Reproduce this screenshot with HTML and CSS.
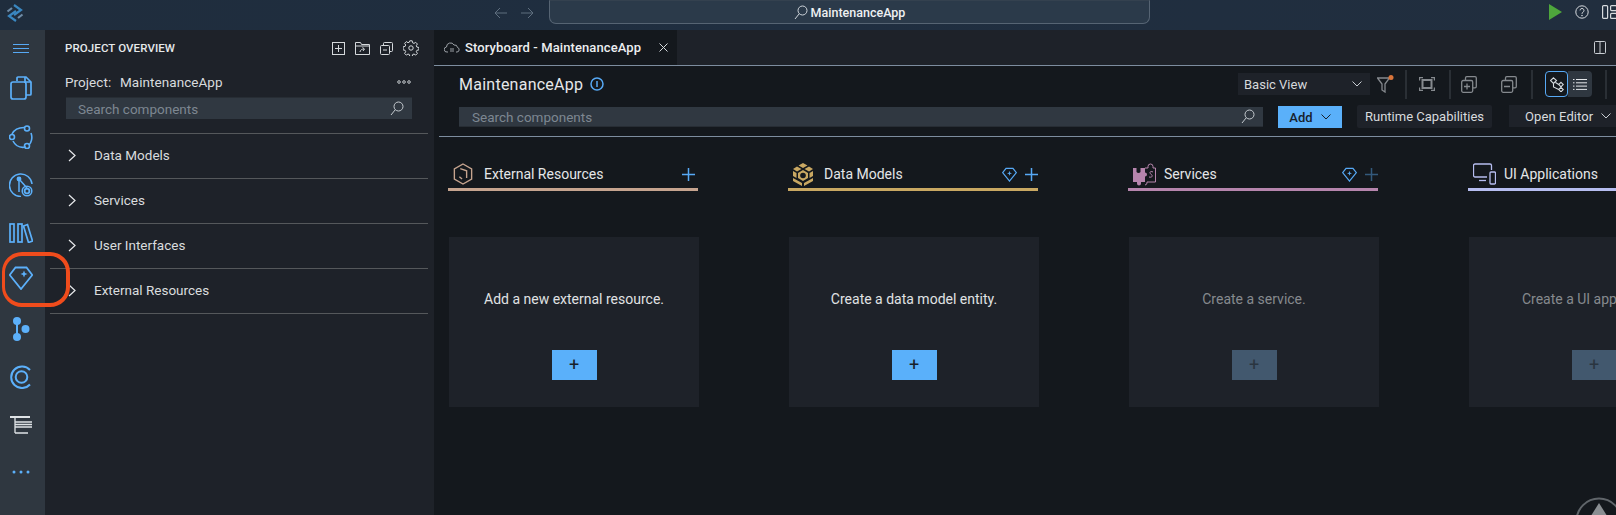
FILE: index.html
```html
<!DOCTYPE html>
<html lang="en">
<head>
<meta charset="utf-8">
<title>Storyboard - MaintenanceApp</title>
<link rel="stylesheet" href="styles.css">
</head>
<body>
<header class="topbar">
  <svg class="logo" width="18" height="18" viewBox="0 0 18 18" fill="none" stroke-width="2.200"><path d="M8 1l7 5-7 5" stroke="#3a87c0"/><path d="M10 17l-7-5 7-5" stroke="#3a87c0"/><path d="M1.500 7.500L6 4M16.500 10.500L12 14" stroke="#6d8aa5"/></svg>
  <div class="nav-arrows">
    <svg width="14" height="12" viewBox="0 0 14 12" fill="none" stroke="#5f6f7f" stroke-width="1"><path d="M13 6H1M6 1L1 6l5 5"/></svg>
    <svg width="14" height="12" viewBox="0 0 14 12" fill="none" stroke="#5f6f7f" stroke-width="1"><path d="M1 6h12M8 1l5 5-5 5"/></svg>
  </div>
  <div class="command">
    <svg width="14" height="15" viewBox="0 0 14 15" fill="none" stroke="#cfd5db" stroke-width="1"><circle cx="8.5" cy="5.5" r="4.5"/><path d="M5.2 8.8L1 14"/></svg>
    <span>MaintenanceApp</span>
  </div>
  <div class="top-actions">
    <svg width="13" height="16" viewBox="0 0 13 16"><path d="M0 0l13 8-13 8z" fill="#4ea63c"/></svg>
    <svg width="14" height="14" viewBox="0 0 14 14" fill="none" stroke="#d6dade" stroke-width="1"><circle cx="7" cy="7" r="6.2"/><path d="M5 5.4a2 2 0 1 1 3 1.8c-.7.4-1 .8-1 1.6"/><circle cx="7" cy="10.6" r=".4"/></svg>
    <svg width="15" height="14" viewBox="0 0 15 14" fill="none" stroke="#d6dade" stroke-width="1.2"><rect x=".6" y=".6" width="5" height="12.8" rx="1"/><rect x="8.6" y=".6" width="6" height="5" rx="1"/><rect x="8.6" y="8.4" width="6" height="5" rx="1"/></svg>
  </div>
</header>

<div class="workspace">
  <nav class="activity">
    <svg class="act act-menu" width="16" height="9" viewBox="0 0 16 9" fill="none" stroke="#57a9f5"><path d="M0 .5h16M0 4.5h16M0 8.5h16"/></svg>
    <svg class="act" width="22" height="24" viewBox="0 0 22 24" fill="none" stroke="#5cb0fa" stroke-width="1.700"><path d="M7 5V2a1 1 0 0 1 1-1h8l5 5v12a1 1 0 0 1-1 1h-4"/><path d="M15 1v5h6"/><rect x="1" y="6" width="15" height="17" rx="2"/></svg>
    <svg class="act" width="24" height="24" viewBox="0 0 24 24" fill="none" stroke="#5cb0fa" stroke-width="1.600"><path d="M3 9C5 5 9 2.500 15 2.500M22 8c2 5 0 10-2 12M17 22c-5 1-10 0-13-6"/><circle cx="18" cy="3.500" r="2.500"/><circle cx="3" cy="12" r="2.500"/><circle cx="18" cy="21" r="2.500"/></svg>
    <svg class="act" width="24" height="24" viewBox="0 0 24 24" fill="none" stroke="#5cb0fa" stroke-width="1.500"><path d="M23 11A11.300 11.300 0 1 0 12 23.500"/><path d="M10 6v13M10 6l8 9"/><circle cx="10" cy="6" r="1.700" fill="#5cb0fa"/><circle cx="18" cy="18" r="4.800"/><circle cx="18" cy="18" r="2.400" stroke-width="1.800"/></svg>
    <svg class="act" width="24" height="20" viewBox="0 0 24 20" fill="none" stroke="#5cb0fa" stroke-width="1.700"><rect x="1" y="1" width="4" height="18"/><rect x="9" y="1" width="4" height="18"/><path d="M14.500 3l4-1.500 5 16.500-4 1.500z"/></svg>
    <svg class="act" width="24" height="24" viewBox="0 0 24 24" fill="none" stroke="#5cb0fa" stroke-width="1.800"><path d="M6.500 1.500h11L23.300 9 12 23 .7 9z"/><path d="M15 4.500l1 2.500 2.500 1-2.500 1-1 2.500-1-2.500-2.500-1L14 7z" fill="#5cb0fa" stroke="none"/></svg>
    <svg class="act" width="18" height="24" viewBox="0 0 18 24" fill="#5cb0fa"><circle cx="5" cy="4" r="4"/><circle cx="5" cy="20" r="4"/><circle cx="13.500" cy="12" r="4"/><path d="M4 4h2v16H4z"/></svg>
    <svg class="act" width="22" height="24" viewBox="0 0 22 24" fill="none" stroke="#5cb0fa" stroke-width="2"><path d="M20 5A10.800 10.800 0 1 0 20 19.500"/><circle cx="11.500" cy="12" r="5.800"/></svg>
    <svg class="act" width="24" height="19" viewBox="0 0 24 19" fill="none" stroke="#dfe3e6" stroke-width="1.300"><path d="M1 1h20" stroke-width="2"/><path d="M6 1v16M6 6h17M6 8.500h17M6 11h17M6 17h13"/></svg>
    <svg class="act" width="18" height="4" viewBox="0 0 18 4" fill="#5cb0fa"><circle cx="2" cy="2" r="1.500"/><circle cx="9" cy="2" r="1.500"/><circle cx="16" cy="2" r="1.500"/></svg>
  </nav>

  <aside class="sidebar">
    <div class="side-head">
      <span class="side-title">PROJECT OVERVIEW</span>
      <div class="side-tools">
        <svg width="13" height="13" viewBox="0 0 13 13" fill="none" stroke="#d5d9dc"><rect x=".5" y=".5" width="12" height="12"/><path d="M6.500 3v7M3 6.500h7"/></svg>
        <svg width="15" height="13" viewBox="0 0 15 13" fill="none" stroke="#d5d9dc"><path d="M.5 12.500V.500h5l1 2h8v10zM.5 4h14"/><path d="M5 10c0-2 2-3 4-3M7.500 5.500L9.500 7l-1.500 2"/></svg>
        <svg width="13" height="13" viewBox="0 0 13 13" fill="none" stroke="#d5d9dc"><rect x=".5" y="3.500" width="9" height="9" rx="1"/><path d="M3.500 3.500v-2a1 1 0 0 1 1-1h7a1 1 0 0 1 1 1v7a1 1 0 0 1-1 1h-2M3 8h4"/></svg>
        <svg width="16" height="16" viewBox="0 0 16 16" fill="none" stroke="#d5d9dc"><circle cx="8" cy="8" r="2.200"/><path d="M6.800.8h2.400l.4 2 1.400.6 1.700-1.100 1.700 1.700-1.100 1.700.6 1.400 2 .4v2.400l-2 .4-.6 1.400 1.100 1.700-1.700 1.700-1.700-1.100-1.400.6-.4 2H6.800l-.4-2-1.400-.6-1.700 1.100-1.700-1.700 1.100-1.700-.6-1.400-2-.4V6.800l2-.4.6-1.400-1.100-1.700 1.700-1.700 1.700 1.100 1.400-.6z"/></svg>
      </div>
    </div>
    <div class="project-row">
      <span>Project:&nbsp; MaintenanceApp</span>
      <svg width="14" height="4" viewBox="0 0 14 4" fill="none" stroke="#c3c8cc"><circle cx="2" cy="2" r="1.300"/><circle cx="7" cy="2" r="1.300"/><circle cx="12" cy="2" r="1.300"/></svg>
    </div>
    <div class="search side-search">
      <span>Search components</span>
      <svg width="14" height="15" viewBox="0 0 14 15" fill="none" stroke="#c5cbd0"><circle cx="8.500" cy="5.500" r="4.500"/><path d="M5.200 8.800L1 14"/></svg>
    </div>
    <ul class="tree">
      <li><svg width="8" height="13" viewBox="0 0 8 13" fill="none" stroke="#e8eaec" stroke-width="1.200"><path d="M1 1l6 5.500L1 12"/></svg>Data Models</li>
      <li><svg width="8" height="13" viewBox="0 0 8 13" fill="none" stroke="#e8eaec" stroke-width="1.200"><path d="M1 1l6 5.500L1 12"/></svg>Services</li>
      <li><svg width="8" height="13" viewBox="0 0 8 13" fill="none" stroke="#e8eaec" stroke-width="1.200"><path d="M1 1l6 5.500L1 12"/></svg>User Interfaces</li>
      <li><svg width="8" height="13" viewBox="0 0 8 13" fill="none" stroke="#e8eaec" stroke-width="1.200"><path d="M1 1l6 5.500L1 12"/></svg>External Resources</li>
    </ul>
  </aside>

  <main class="main">
    <div class="tabbar">
      <div class="tab">
        <svg width="16" height="11" viewBox="0 0 16 11" fill="none" stroke="#aab0b6" stroke-width=".9"><path d="M4 10H3a2.500 2.500 0 0 1-.5-5A4 4 0 0 1 10 3a3 3 0 0 1 3.500 2.500A2.300 2.300 0 0 1 13 10h-1"/><path d="M6 7h4M6 9h4"/></svg>
        <span>Storyboard - MaintenanceApp</span>
        <svg class="tab-x" width="9" height="9" viewBox="0 0 9 9" fill="none" stroke="#d5d9dc"><path d="M.5.500l8 8M8.500.500l-8 8"/></svg>
      </div>
      <svg class="split" width="12" height="13" viewBox="0 0 12 13" fill="none" stroke="#c8cdd2"><rect x=".5" y=".5" width="11" height="12" rx="1"/><path d="M6 .5v12"/></svg>
    </div>

    <section class="board">
      <div class="board-head">
        <div class="row row-title">
          <h1>MaintenanceApp</h1>
          <svg class="info" width="14" height="14" viewBox="0 0 14 14" fill="none" stroke="#57a9f5" stroke-width="1.500"><circle cx="7" cy="7" r="6"/><path d="M7 4v6"/></svg>
          <div class="view-tools">
            <div class="select"><span>Basic View</span><svg width="10" height="6" viewBox="0 0 10 6" fill="none" stroke="#c8cdd2"><path d="M.5.500L5 5 9.500.500"/></svg></div>
            <svg class="filter" width="17" height="18" viewBox="0 0 17 18" fill="none" stroke="#85898e" stroke-width="1.300"><path d="M.5 3h12L8 9v8l-3-2V9z"/><circle cx="14" cy="2.500" r="2.500" fill="#d9743a" stroke="none"/></svg>
            <i class="sep"></i>
            <svg class="vt vt-fit" width="16" height="14" viewBox="0 0 16 14" fill="none" stroke="#85898e" stroke-width="1.200"><path d="M.6 3.500V.6H4M12 .6h3.400v2.900M15.400 10.500v2.900H12M4 13.400H.6v-2.900"/><rect x="3.500" y="3" width="9" height="8" stroke-width="2"/></svg>
            <i class="sep"></i>
            <svg class="vt vt-a" width="16" height="17" viewBox="0 0 16 17" fill="none" stroke="#85898e" stroke-width="1.300"><rect x=".7" y="4.500" width="11" height="11.800" rx="1.500"/><path d="M4.500 4.500v-2.500a1.300 1.300 0 0 1 1.300-1.300h8.200a1.300 1.300 0 0 1 1.300 1.300v8.500a1.300 1.300 0 0 1-1.300 1.300h-2.300M3 10.500h6M6 7.500v6"/></svg>
            <svg class="vt vt-b" width="16" height="17" viewBox="0 0 16 17" fill="none" stroke="#85898e" stroke-width="1.300"><rect x=".7" y="4.500" width="11" height="11.800" rx="1.500"/><path d="M4.500 4.500v-2.500a1.300 1.300 0 0 1 1.300-1.300h8.200a1.300 1.300 0 0 1 1.300 1.300v8.500a1.300 1.300 0 0 1-1.300 1.300h-2.300M3 10.500h6"/></svg>
            <i class="sep"></i>
            <div class="toggle">
              <span class="tg tg-on"><svg width="14" height="15" viewBox="0 0 14 15" fill="none" stroke="#d5dade" stroke-width="1.100"><path d="M3.500.8L6.500 3.500 3.500 6.500.5 3.500zM11 5.300l2.300 2.200-2.300 2.300-2.300-2.300zM11 10.300l2.300 2.200-2.300 2.300-2.300-2.300zM5.500 5.500l3.200 2M3.500 6.500V10l5.200 2.500"/></svg></span>
              <span class="tg tg-list"><svg width="14" height="11" viewBox="0 0 14 11" fill="none" stroke="#e4e7ea"><path d="M3 .5h11M3 3.800h11M3 7.100h11M3 10.400h11M0 .5h1.500M0 3.800h1.500M0 7.100h1.500M0 10.400h1.500"/></svg></span>
            </div>
            <i class="sep sep-end"></i>
          </div>
        </div>
        <div class="row row-actions">
          <div class="search board-search">
            <span>Search components</span>
            <svg width="14" height="15" viewBox="0 0 14 15" fill="none" stroke="#c5cbd0"><circle cx="8.500" cy="5.500" r="4.500"/><path d="M5.200 8.800L1 14"/></svg>
          </div>
          <button class="add">Add<svg width="10" height="6" viewBox="0 0 10 6" fill="none" stroke="#17202b"><path d="M.5.500L5 5 9.500.500"/></svg></button>
          <button class="runtime">Runtime Capabilities</button>
          <button class="editor">Open Editor<svg width="10" height="6" viewBox="0 0 10 6" fill="none" stroke="#c8cdd2"><path d="M.5.500L5 5 9.500.500"/></svg></button>
        </div>
      </div>

      <div class="columns">
        <article class="col col-ext">
          <div class="col-head">
            <span class="col-ic"><svg width="20" height="22" viewBox="0 0 22 24" fill="none" stroke="#c6a48f" stroke-width="1.500"><path d="M11 1l9.500 5.500v11L11 23l-9.500-5.500v-11z"/><path d="M8 6l7 2.500v8M7 15l3 2.500"/></svg></span>
            <span class="col-title">External Resources</span>
            <svg class="col-plus plus-inset" width="13" height="13" viewBox="0 0 13 13" stroke="#57a9f5" stroke-width="1.500"><path d="M6.500 0v13M0 6.500h13"/></svg>
          </div>
          <div class="card">
            <p>Add a new external resource.</p>
            <button class="card-btn">+</button>
          </div>
        </article>
        <article class="col col-data">
          <div class="col-head">
            <span class="col-ic"><svg width="20" height="23" viewBox="0 0 20 23" fill="#c9a862"><path d="M10 0l4.500 2.500L10 5 5.500 2.500zM4 3.500l4.500 2.500L4 8.500 0 6zM16 3.500L20 6l-4 2.500L11.500 6zM0 8l3.500 2v5L0 13zM20 8v5l-3.500 2v-5zM10 7l5 3v5l-5 3-5-3v-5zM0 15l4.500 2.500L9 20v3l-4.500-2.500L0 18zM20 15v3l-4.500 2.500L11 23v-3l4.500-2.500z"/><circle cx="10" cy="12.500" r="2.800" fill="#14181d"/></svg></span>
            <span class="col-title">Data Models</span>
            <svg class="col-gem" width="15" height="15" viewBox="0 0 24 24" fill="none" stroke="#57a9f5" stroke-width="2"><path d="M6.500 2h11L23 9 12 22.500 1 9z"/><path d="M12 6l1 3 3 1-3 1-1 3-1-3-3-1 3-1z" fill="#57a9f5" stroke="none"/></svg>
            <svg class="col-plus" width="13" height="13" viewBox="0 0 13 13" stroke="#57a9f5" stroke-width="1.500"><path d="M6.500 0v13M0 6.500h13"/></svg>
          </div>
          <div class="card">
            <p>Create a data model entity.</p>
            <button class="card-btn">+</button>
          </div>
        </article>
        <article class="col col-svc">
          <div class="col-head">
            <span class="col-ic"><svg width="23" height="23" viewBox="0 0 23 23"><path fill="#b685ad" d="M0 5h3.500v4a2.500 2.500 0 0 0 4 0V5H12v4.500a2 2 0 0 1 0 4V19H8v1.500a2 2 0 0 1-4 0V19H0z"/><g fill="none" stroke="#b685ad"><path d="M12 5h3V3.500a2.500 2.500 0 0 1 5 0V5h2.500v14H14v1a2.200 2.200 0 0 1-2 2"/><path d="M20 9c-3-1.500-4 1-2 2.200s1.500 3.800-2 2.800"/></g></svg></span>
            <span class="col-title">Services</span>
            <svg class="col-gem" width="15" height="15" viewBox="0 0 24 24" fill="none" stroke="#57a9f5" stroke-width="2"><path d="M6.500 2h11L23 9 12 22.500 1 9z"/><path d="M12 6l1 3 3 1-3 1-1 3-1-3-3-1 3-1z" fill="#57a9f5" stroke="none"/></svg>
            <svg class="col-plus" width="13" height="13" viewBox="0 0 13 13" stroke="#33597c" stroke-width="1.500"><path d="M6.500 0v13M0 6.500h13"/></svg>
          </div>
          <div class="card is-off">
            <p>Create a service.</p>
            <button class="card-btn">+</button>
          </div>
        </article>
        <article class="col col-ui">
          <div class="col-head">
            <span class="col-ic"><svg width="23" height="22" viewBox="0 0 23 22" fill="none" stroke="#b6bdf0" stroke-width="1.300"><path d="M14 14H2a1.500 1.500 0 0 1-1.500-1.500v-10A1.500 1.500 0 0 1 2 1h15a1.500 1.500 0 0 1 1.500 1.500V7"/><path d="M6 17.500h7"/><rect x="17" y="9" width="5.500" height="12" rx="1"/></svg></span>
            <span class="col-title">UI Applications</span>
          </div>
          <div class="card is-off">
            <p>Create a UI application.</p>
            <button class="card-btn">+</button>
          </div>
        </article>
      </div>
    </section>
  </main>
</div>

<div class="highlight"></div>
<svg class="scroll-top" width="48" height="18" viewBox="0 0 48 18" fill="none"><circle cx="24" cy="24" r="22.500" stroke="#60656a" stroke-width="2"/><path d="M24 6l10 16H14z" fill="#8a8e92"/></svg>
</body>
</html>
```

FILE: styles.css
```css
* { box-sizing: border-box; }
html, body { margin: 0; height: 100%; }
body {
  position: relative;
  width: 1616px;
  height: 515px;
  overflow: hidden;
  display: flex;
  flex-direction: column;
  background: #14181d;
  color: #e2e5e8;
  font-family: Roboto, "Liberation Sans", sans-serif;
  font-size: 14px;
}
svg { display: block; flex: none; }
p, h1, ul { margin: 0; padding: 0; }
button { font-family: inherit; border: 0; padding: 0; }

.topbar {
  flex: none;
  height: 30px;
  display: flex;
  align-items: flex-start;
  background: linear-gradient(90deg, #1f2d3d, #1f2e40 50%, #212e3e);
}
.logo { flex: none; margin: 4px 0 0 6px; }
.nav-arrows { flex: none; display: flex; gap: 12px; margin: 7px 0 0 470px; }
.command {
  flex: none;
  margin-left: 15px;
  width: 601px;
  height: 24px;
  display: flex;
  align-items: center;
  justify-content: center;
  gap: 3px;
  background: #2b3a4a;
  border: 1px solid #566473;
  border-top-color: #34414f;
  border-radius: 0 0 7px 7px;
  font-size: 12.500px;
  font-weight: 500;
  color: #eef0f2;
}
.top-actions { flex: none; display: flex; align-items: center; gap: 13px; height: 24px; margin-left: 399px; }

.workspace { flex: 1; min-height: 0; display: flex; }

.activity {
  flex: none;
  width: 45px;
  padding-right: 3px;
  background: #2f3740;
  display: flex;
  flex-direction: column;
  align-items: center;
}
.act-menu { margin-top: 14px; margin-bottom: 23px; }
.activity .act:nth-child(2) { margin-bottom: 25px; }
.activity .act:nth-child(3) { margin-bottom: 24px; }
.activity .act:nth-child(4) { margin-bottom: 26px; }
.activity .act:nth-child(5) { margin-bottom: 23px; }
.activity .act:nth-child(6) { margin-bottom: 27px; }
.activity .act:nth-child(7) { margin-bottom: 24px; }
.activity .act:nth-child(8) { margin-bottom: 27px; }
.activity .act:nth-child(9) { margin-bottom: 35px; }

.sidebar {
  flex: none;
  width: 389px;
  background: #1e2229;
  padding: 0 6px 0 5px;
}
.side-head {
  height: 36px;
  padding: 0 9px 0 15px;
  display: flex;
  justify-content: space-between;
  align-items: center;
}
.side-title { font-size: 11.500px; font-weight: 500; letter-spacing: .1px; color: #e6e9eb; }
.side-tools { display: flex; align-items: center; gap: 10px; }
.project-row {
  margin-top: 6px;
  height: 20px;
  padding: 0 17px 0 15px;
  display: flex;
  justify-content: space-between;
  align-items: center;
  font-size: 13.500px;
  letter-spacing: .05px;
  word-spacing: 1px;
  color: #d8dbde;
}
.search {
  flex: none;
  display: flex;
  align-items: center;
  justify-content: space-between;
  background: #303841;
  color: #7d8791;
  font-size: 13.500px;
}
.side-search {
  margin: 5px 16px 0 16px;
  height: 22px;
  padding: 0 8px 0 12px;
  border-top: 1px solid #272d34;
}
.tree { list-style: none; margin-top: 14px; border-top: 1px solid #55585b; }
.tree li {
  height: 45px;
  padding: 0 0 2px 18px;
  display: flex;
  align-items: center;
  gap: 18px;
  border-bottom: 1px solid #55585b;
  font-size: 13.500px;
  color: #d9dcde;
}

.main { flex: 1; min-width: 0; display: flex; flex-direction: column; }
.tabbar {
  flex: none;
  height: 36px;
  display: flex;
  justify-content: space-between;
  background: #1e2229;
  border-bottom: 1px solid #7d8d9f;
  box-shadow: inset 5px 0 0 #14181d;
}
.tab {
  flex: none;
  width: 243px;
  height: 35px;
  padding: 0 0 0 10px;
  display: flex;
  align-items: center;
  background: #14181d;
  font-size: 13px;
  font-weight: 500;
  letter-spacing: .1px;
  color: #eceef0;
}
.tab span { margin-left: 5px; }
.tab-x { margin-left: 18px; }
.split { margin: 11px 10px 0 0; }

.board { flex: 1; min-height: 0; margin-left: 5px; overflow: hidden; }
.board-head { height: 71px; padding-left: 20px; border-bottom: 1px solid #7d8d9f; }
.row { display: flex; align-items: center; }
.row-title { height: 36px; padding-right: 9px; }
h1 { font-size: 16px; font-weight: 400; letter-spacing: .25px; color: #e6e8ea; }
.info { margin-left: 7px; }
.view-tools { margin-left: auto; display: flex; align-items: center; }
.select {
  flex: none;
  width: 132px;
  height: 22px;
  padding: 0 8px 0 6px;
  display: flex;
  align-items: center;
  justify-content: space-between;
  background: #1e2229;
  font-size: 13px;
  color: #d6d9dc;
}
.filter { margin-left: 7px; }
.sep { flex: none; width: 2px; height: 29px; margin: 0 0 0 11px; background: #2a2f35; display: block; }
.vt-fit { margin: 0 3px 0 12px; }
.vt-a { margin-left: 10px; }
.vt-b { margin: 0 3px 0 24px; }
.toggle { display: flex; margin-left: 12px; }
.sep-end { margin-left: 13px; }
.tg { flex: none; height: 26px; width: 24px; display: flex; align-items: center; justify-content: center; border-radius: 4px; }
.tg-on { width: 23px; border: 1px solid #57a9f5; }
.tg-list { background: #2f3740; border-radius: 0 4px 4px 0; }
.row-actions { height: 34px; align-items: flex-start; }
.board-search {
  width: 804px;
  height: 20px;
  margin-top: 5px;
  padding: 0 8px 0 13px;
  border-bottom: 1px solid #272d34;
}
.add {
  flex: none;
  margin: 4px 0 0 15px;
  width: 64px;
  height: 22px;
  display: flex;
  align-items: center;
  justify-content: center;
  gap: 8px;
  background: #5ab0fa;
  color: #17202b;
  font-size: 13px;
  font-weight: 500;
}
.runtime {
  flex: none;
  margin: 3px 0 0 15px;
  width: 135px;
  height: 23px;
  background: #1e2229;
  color: #d8dbde;
  font-size: 13px;
  border-radius: 2px;
}
.editor {
  flex: none;
  margin: 3px 0 0 17px;
  width: 120px;
  height: 22px;
  display: flex;
  align-items: center;
  gap: 8px;
  padding-left: 16px;
  background: #1e2229;
  color: #d8dbde;
  font-size: 13px;
  letter-spacing: .1px;
}

.columns { display: flex; gap: 90px; padding-left: 9px; }
.col { flex: none; width: 250px; }
.col-head {
  height: 31px;
  margin-top: 23px;
  padding-left: 5px;
  display: flex;
  align-items: center;
  border-bottom: 3px solid;
}
.col-ic { flex: none; width: 31px; }
.col-ext .col-head { border-color: #c6a48f; }
.col-data .col-head { border-color: #c9a862; }
.col-svc .col-head { border-color: #b685ad; }
.col-ui .col-head { border-color: #b6bdf0; }
.col-title { font-size: 14px; color: #e4e6e8; }
.col-gem { margin-left: auto; }
.col-title + .col-plus { margin-left: auto; }
.plus-inset { margin-right: 3px; }
.col-gem + .col-plus { margin-left: 8px; }
.card {
  margin: 46px 0 0 1px;
  width: 250px;
  height: 170px;
  background: #1e2229;
  display: flex;
  flex-direction: column;
  align-items: center;
}
.card p { margin-top: 53px; height: 18px; line-height: 18px; white-space: nowrap; color: #e0e2e4; }
.card-btn {
  flex: none;
  margin-top: 42px;
  width: 45px;
  height: 30px;
  background: #5ab0fa;
  color: #17202b;
  font-size: 18px;
  line-height: 30px;
}
.is-off p { color: #868a8e; }
.is-off .card-btn { background: #42586e; color: #2a3540; }

.highlight {
  position: absolute;
  left: 2px;
  top: 252px;
  width: 68px;
  height: 55px;
  border: 4px solid #f04c1c;
  border-left-width: 3px;
  border-radius: 20px;
}
.scroll-top { position: absolute; left: 1575px; top: 497px; }
```
